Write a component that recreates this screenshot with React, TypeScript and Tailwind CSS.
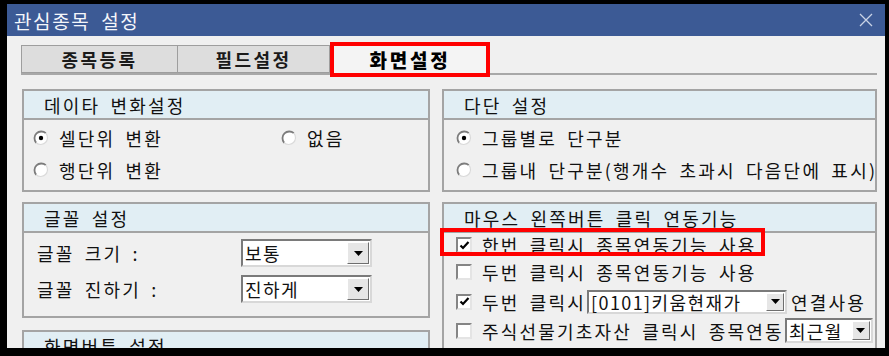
import React from "react";

const T =
  "font-['Noto_Sans_CJK_KR',sans-serif] text-[18px] tracking-[2.2px] [word-spacing:4px] leading-none text-[#111] whitespace-nowrap";
const TS =
  "font-['Noto_Sans_CJK_KR',sans-serif] text-[18px] tracking-[1.4px] leading-[18px] text-[#111] whitespace-nowrap";

function Radio({ checked }: { checked?: boolean }) {
  return (
    <svg width="16" height="16" viewBox="0 0 16 16" className="shrink-0">
      <circle cx="8" cy="8" r="6.8" fill="#fff" />
      <path d="M3.2 12.8 A6.8 6.8 0 0 1 12.8 3.2" stroke="#7c7c7c" strokeWidth="1.8" fill="none" />
      <path d="M12.8 3.2 A6.8 6.8 0 0 1 3.2 12.8" stroke="#dadada" strokeWidth="1.2" fill="none" />
      {checked && <circle cx="8" cy="8" r="2.2" fill="#000" />}
    </svg>
  );
}

function Check({ checked }: { checked?: boolean }) {
  return (
    <div className="w-[16px] h-[16px] shrink-0 bg-white border-2 border-t-[#858585] border-l-[#858585] border-r-[#e4e4e4] border-b-[#e4e4e4] flex items-center justify-center">
      {checked && (
        <svg width="11" height="11" viewBox="0 0 11 11">
          <path d="M1.5 5.5 L4 8 L9.5 2" stroke="#000" strokeWidth="2.2" fill="none" />
        </svg>
      )}
    </div>
  );
}

function Select({ className, text, btn }: { className: string; text: string; btn: string }) {
  return (
    <div
      className={
        "flex items-stretch bg-white border-2 border-t-[#7a7a7a] border-l-[#7a7a7a] border-r-[#d8d8d8] border-b-[#d8d8d8] shrink-0 " +
        className
      }
    >
      <div className={"flex-1 min-w-0 flex items-center pl-[2px] " + TS}>{text}</div>
      <div
        className={
          "shrink-0 bg-[#e6e6e6] border border-t-white border-l-white border-r-[#6e6e6e] border-b-[#6e6e6e] flex items-center justify-center m-[1px] " +
          btn
        }
      >
        <svg width="9" height="5" viewBox="0 0 9 5">
          <polygon points="0,0 9,0 4.5,5" fill="#000" />
        </svg>
      </div>
    </div>
  );
}

function Header({ children }: { children: React.ReactNode }) {
  return (
    <div className="h-[29px] shrink-0 bg-[#e1eef4] border-b-2 border-[#a4a4a4] flex items-center pl-[20px]">
      <span className={T}>{children}</span>
    </div>
  );
}

export default function App() {
  return (
    <div className="w-[889px] h-[356px] bg-black pt-[4px] pl-[7px] overflow-hidden">
      <div className="relative w-[878px] h-[344px] bg-[#f0f0f0] overflow-hidden flex flex-col">
        {/* title bar */}
        <div className="h-[32px] shrink-0 bg-[#3c5a95] flex items-center justify-between pl-[7px] pr-[12px]">
          <span className="font-['Noto_Sans_CJK_KR',sans-serif] text-[19px] tracking-[1.6px] [word-spacing:5px] leading-none text-[#f4f6fb] whitespace-nowrap">
            관심종목 설정
          </span>
          <svg width="14" height="14" viewBox="0 0 14 14">
            <path d="M1 1 L13 13 M13 1 L1 13" stroke="#c9d3e6" strokeWidth="1.3" />
          </svg>
        </div>

        {/* tabs */}
        <div className="mt-[9px] ml-[14px] mr-[8px] h-[30px] shrink-0 flex border-b-2 border-[#a8a8a8]">
          <div className="w-[157px] h-full bg-[#dddddd] border border-[#9e9e9e] flex items-center justify-center">
            <span className="font-['Noto_Sans_CJK_KR',sans-serif] text-[18px] tracking-[2.4px] leading-none text-[#1a1a1a] font-bold whitespace-nowrap">
              종목등록
            </span>
          </div>
          <div className="w-[152px] h-full bg-[#dddddd] border border-l-0 border-[#9e9e9e] flex items-center justify-center">
            <span className="font-['Noto_Sans_CJK_KR',sans-serif] text-[18px] tracking-[2.4px] leading-none text-[#1a1a1a] font-bold whitespace-nowrap">
              필드설정
            </span>
          </div>
          <div className="w-[160px] h-full bg-[#f4f4f4] flex items-center justify-center">
            <span className="font-['Noto_Sans_CJK_KR',sans-serif] text-[19px] tracking-[2.8px] leading-none text-black font-black whitespace-nowrap">
              화면설정
            </span>
          </div>
        </div>

        {/* panels */}
        <div className="mt-[14px] ml-[15px] flex gap-[12px]">
          {/* left column */}
          <div className="w-[408px] flex flex-col shrink-0">
            <div className="h-[103px] border-2 border-[#a4a4a4] flex flex-col">
              <Header>데이타 변화설정</Header>
              <div className="pt-[2px] pl-[9px] flex flex-col">
                <div className="h-[32px] flex items-center">
                  <div className="w-[248px] flex items-center gap-[10px]">
                    <Radio checked />
                    <span className={T}>셀단위 변환</span>
                  </div>
                  <div className="flex items-center gap-[10px]">
                    <Radio />
                    <span className={T}>없음</span>
                  </div>
                </div>
                <div className="h-[32px] flex items-center gap-[10px]">
                  <Radio />
                  <span className={T}>행단위 변환</span>
                </div>
              </div>
            </div>

            <div className="mt-[10px] h-[116px] border-2 border-[#a4a4a4] flex flex-col">
              <Header>글꼴 설정</Header>
              <div className="pt-[6px] pl-[13px] flex flex-col gap-[8px]">
                <div className="h-[28px] flex items-center">
                  <span className={T + " w-[204px]"}>글꼴 크기 :</span>
                  <Select className="w-[131px] h-[28px]" btn="w-[22px]" text="보통" />
                </div>
                <div className="h-[28px] flex items-center">
                  <span className={T + " w-[204px]"}>글꼴 진하기 :</span>
                  <Select className="w-[131px] h-[28px]" btn="w-[22px]" text="진하게" />
                </div>
              </div>
            </div>

            <div className="mt-[12px] h-[100px] border-2 border-[#a4a4a4] flex flex-col">
              <Header>화면버튼 설정</Header>
            </div>
          </div>

          {/* right column */}
          <div className="w-[435px] flex flex-col shrink-0">
            <div className="h-[103px] border-2 border-[#a4a4a4] flex flex-col">
              <Header>다단 설정</Header>
              <div className="pt-[2px] pl-[12px] flex flex-col">
                <div className="h-[32px] flex items-center gap-[10px]">
                  <Radio checked />
                  <span className={T}>그룹별로 단구분</span>
                </div>
                <div className="h-[32px] flex items-center gap-[10px]">
                  <Radio />
                  <span className={T}>그룹내 단구분(행개수 초과시 다음단에 표시)</span>
                </div>
              </div>
            </div>

            <div className="mt-[10px] h-[200px] border-2 border-[#a4a4a4] flex flex-col">
              <Header>마우스 왼쪽버튼 클릭 연동기능</Header>
              <div className="pl-[12px] flex flex-col">
                <div className="h-[24px] flex items-center gap-[10px]">
                  <Check checked />
                  <span className={T}>한번 클릭시 종목연동기능 사용</span>
                </div>
                <div className="h-[30px] flex items-center gap-[10px]">
                  <Check />
                  <span className={T}>두번 클릭시 종목연동기능 사용</span>
                </div>
                <div className="h-[29px] flex items-center gap-[10px]">
                  <Check checked />
                  <div className="flex items-center">
                    <span className={T}>두번 클릭시</span>
                    <Select className="ml-[1px] w-[200px] h-[24px]" btn="w-[18px]" text="[0101]키움현재가" />
                    <span className={T + " ml-[4px]"}>연결사용</span>
                  </div>
                </div>
                <div className="h-[29px] flex items-center gap-[10px]">
                  <Check />
                  <div className="flex items-center">
                    <span className={T}>주식선물기초자산 클릭시 종목연동</span>
                    <Select className="ml-[1px] w-[88px] h-[25px]" btn="w-[18px]" text="최근월" />
                  </div>
                </div>
              </div>
            </div>
          </div>
        </div>

        {/* red highlight boxes */}
        <div className="absolute left-[323px] top-[38px] w-[160px] h-[35px] border-4 border-[#ff0000] pointer-events-none" />
        <div className="absolute left-[433px] top-[224px] w-[325px] h-[28px] border-4 border-[#ff0000] pointer-events-none" />
      </div>
    </div>
  );
}
